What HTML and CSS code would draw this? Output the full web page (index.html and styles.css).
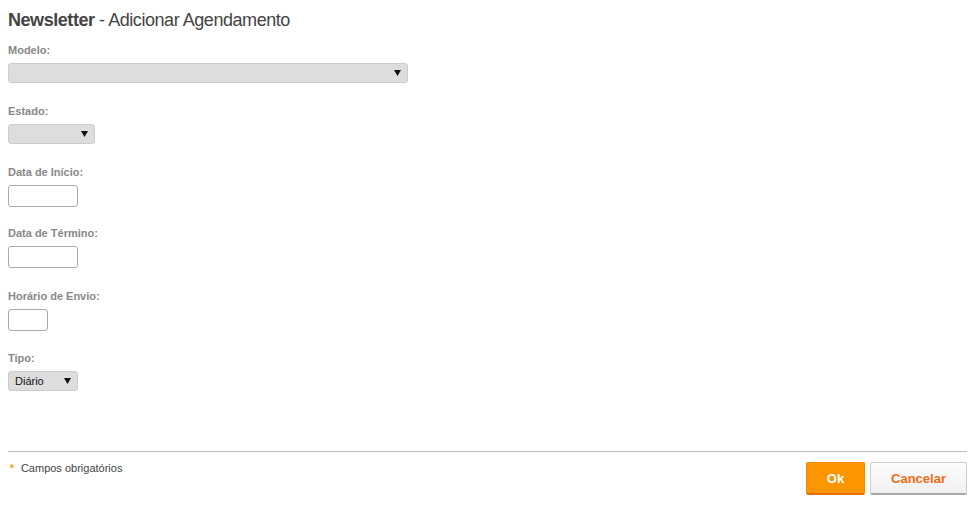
FILE: index.html
```html
<!DOCTYPE html>
<html lang="pt">
<head>
<meta charset="utf-8">
<title>Newsletter - Adicionar Agendamento</title>
<link rel="stylesheet" href="styles.css">
</head>
<body>
<div class="page">
  <h1 class="title"><strong>Newsletter</strong> - Adicionar Agendamento</h1>
  <form class="form">
    <div class="field">
      <label class="label">Modelo:</label>
      <div class="select select-wide"><span class="select-text"></span><svg class="arrow" width="7" height="6" viewBox="0 0 7 6"><path d="M0 0H7L3.5 6Z" fill="#111"/></svg></div>
    </div>
    <div class="field">
      <label class="label">Estado:</label>
      <div class="select select-state"><span class="select-text"></span><svg class="arrow" width="7" height="6" viewBox="0 0 7 6"><path d="M0 0H7L3.5 6Z" fill="#111"/></svg></div>
    </div>
    <div class="field field-tight">
      <label class="label">Data de Início:</label>
      <div class="input input-date"></div>
    </div>
    <div class="field">
      <label class="label">Data de Término:</label>
      <div class="input input-date"></div>
    </div>
    <div class="field field-mid">
      <label class="label">Horário de Envio:</label>
      <div class="input input-time"></div>
    </div>
    <div class="field">
      <label class="label">Tipo:</label>
      <div class="select select-type"><span class="select-text">Diário</span><svg class="arrow" width="7" height="6" viewBox="0 0 7 6"><path d="M0 0H7L3.5 6Z" fill="#111"/></svg></div>
    </div>
  </form>
  <div class="footer">
    <div class="required"><span class="star">*</span>Campos obrigatórios</div>
    <div class="buttons">
      <button class="btn btn-ok" type="button">Ok</button>
      <button class="btn btn-cancel" type="button">Cancelar</button>
    </div>
  </div>
</div>
</body>
</html>
```
FILE: styles.css
```css
* { box-sizing: border-box; }
html, body { margin: 0; padding: 0; background: #fff; }
body {
  font-family: "Liberation Sans", Arial, sans-serif;
  color: #444;
}
.page {
  padding: 8px;
  display: flex;
  flex-direction: column;
}
.title {
  margin: 0;
  font-size: 18px;
  line-height: 24px;
  font-weight: normal;
  color: #444;
  letter-spacing: -0.45px;
}
.title strong { font-weight: bold; }
.form {
  margin-top: 12px;
  display: flex;
  flex-direction: column;
  height: 407px;
}
.field {
  display: flex;
  flex-direction: column;
  align-items: flex-start;
  padding-bottom: 22px;
}
.field-tight { padding-bottom: 20px; }
.field-mid { padding-bottom: 21px; }
.label {
  font-size: 11px;
  line-height: 13px;
  font-weight: bold;
  color: #888;
  margin-bottom: 6px;
}
.select {
  height: 20px;
  background: #ddd;
  border: 1px solid #ccc;
  border-radius: 3px;
  display: flex;
  align-items: center;
  justify-content: space-between;
  padding: 0 6px 0 6px;
  font-size: 11px;
  color: #111;
}
.select-wide { width: 400px; }
.select-state { width: 87px; }
.select-type { width: 70px; }
.arrow { display: block; }
.input {
  height: 22px;
  background: #fff;
  border: 1px solid #aaa;
  border-radius: 3px;
}
.input-date { width: 70px; }
.input-time { width: 40px; }
.footer {
  border-top: 1px solid #bbb;
  display: flex;
  justify-content: space-between;
  align-items: flex-start;
  padding-top: 10px;
}
.required {
  font-size: 11px;
  line-height: 13px;
  color: #444;
  display: flex;
  align-items: flex-start;
}
.star {
  color: #f90;
  font-weight: bold;
  font-size: 10px;
  margin: 0 7px 0 0;
  padding-left: 2px;
}
.buttons {
  display: flex;
  gap: 5px;
}
.btn {
  font-family: "Liberation Sans", Arial, sans-serif;
  font-size: 13px;
  font-weight: bold;
  height: 33px;
  border-radius: 2px;
  cursor: pointer;
  padding: 0;
}
.btn-ok {
  width: 59px;
  background: #fb9500;
  border: 1px solid #f58a00;
  border-bottom: 2px solid #e86f00;
  color: #fff;
}
.btn-cancel {
  width: 97px;
  background: linear-gradient(#fdfdfd, #f0f0f0);
  border: 1px solid #ccc;
  border-bottom: 2px solid #a8a8a8;
  color: #f26a10;
}
```
